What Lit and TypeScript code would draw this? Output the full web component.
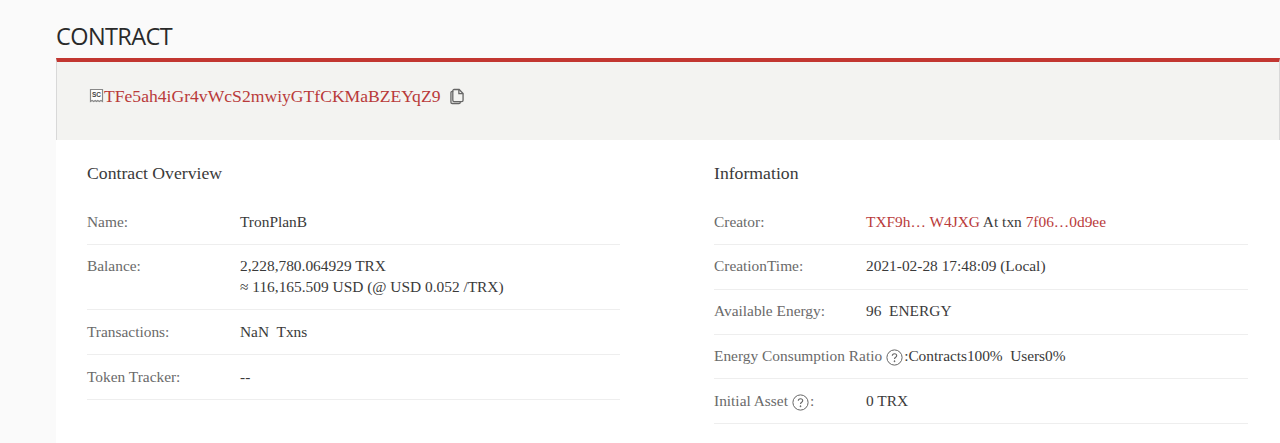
import { LitElement, html, css } from "lit";
import { customElement } from "lit/decorators.js";

const help = html`<svg class="help" width="17" height="17" viewBox="0 0 17 17" fill="none" stroke="#666"><circle cx="8.5" cy="8.5" r="7.6"/><path d="M6.3 6.8c0-1.3 1-2.1 2.2-2.1s2.2.8 2.2 2c0 1.5-2.2 1.6-2.2 3.3" stroke-width="1.1"/><circle cx="8.5" cy="12.2" r=".5" fill="#666"/></svg>`;

@customElement("app-root")
export class AppRoot extends LitElement {
  static styles = css`
    :host { display: block; height: 443px; overflow: hidden; background: #fafafa; font-family: "Liberation Serif", serif; color: #333; }
    .page { padding: 0 0 0 56px; }
    h1 { margin: 0; height: 58px; box-sizing: border-box; padding-top: 20px; font: 400 23.5px/32px "Open Sans", sans-serif; color: #2a2a2a; letter-spacing: -0.6px; }
    .head { height: 82px; box-sizing: border-box; border-top: 4px solid #c23631; border-left: 1px solid #d8d8d8; border-right: 1px solid #d8d8d8; background: #f3f3f1; padding: 23px 0 0 32px; }
    .addr { display: flex; align-items: center; height: 22px; }
    .link { color: #b93a3a; }
    .big { font-size: 17.63px; line-height: 22px; }
    .copy { margin-left: 9px; margin-top: 1px; }
    .body { background: #fff; height: 303px; display: grid; grid-template-columns: 533px 534px; column-gap: 94px; padding: 0 0 0 31px; }
    h2 { margin: 0; height: 60px; box-sizing: border-box; padding-top: 23px; font: 400 17.7px/20px "Liberation Serif", serif; color: #3a3a3a; }
    .row { display: flex; align-items: flex-start; border-bottom: 1px solid #eee; font-size: 15.4px; line-height: 20.7px; padding: 11.6px 0 11.55px; }
    .lbl { width: 153px; flex: none; color: #6a6a6a; display: flex; align-items: center; white-space: nowrap; }
    .val { color: #3a3a3a; white-space: pre; }
    .help { margin: 0 1px 0 4px; flex: none; position: relative; top: 1px; }
    .right .lbl { width: 152px; }
    .wide .lbl { width: auto; }
    .tight { letter-spacing: -0.05px; }
  `;
  render() {
    return html`<div class="page">
      <h1>CONTRACT</h1>
      <div class="head"><div class="addr">
        <svg width="15" height="16" viewBox="0 0 15 16" fill="none"><path d="M1.5 1.5h12v12l-1.6-1-1.6 1-1.5-1-1.3 1-1.3-1-1.5 1-1.6-1-1.6 1z" fill="#fff" stroke="#888" stroke-width="1.2"/><text x="7.5" y="9.2" text-anchor="middle" font-family="Liberation Sans" font-size="6.5" font-weight="700" fill="#444">SC</text></svg>
        <span class="link big">TFe5ah4iGr4vWcS2mwiyGTfCKMaBZEYqZ9</span>
        <svg class="copy" width="14" height="17" viewBox="0 0 15 17" fill="none" stroke="#666" stroke-width="1.4"><path d="M3.5 3H2.4C1.6 3 1 3.6 1 4.4v10.2c0 .8.6 1.4 1.4 1.4h7.2c.8 0 1.4-.6 1.4-1.4V14"/><path d="M4.4 1h5.4L14 5.2v7.4c0 .8-.6 1.4-1.4 1.4H4.4c-.8 0-1.4-.6-1.4-1.4V2.4C3 1.6 3.6 1 4.4 1z"/><path d="M9.5 1v4.5H14"/></svg>
      </div></div>
      <div class="body">
        <div>
          <h2>Contract Overview</h2>
          <div class="row"><div class="lbl">Name:</div><div class="val">TronPlanB</div></div>
          <div class="row"><div class="lbl">Balance:</div><div class="val">2,228,780.064929 TRX
≈ 116,165.509 USD (@ USD 0.052 /TRX)</div></div>
          <div class="row"><div class="lbl">Transactions:</div><div class="val">NaN  Txns</div></div>
          <div class="row"><div class="lbl">Token Tracker:</div><div class="val">--</div></div>
        </div>
        <div class="right">
          <h2>Information</h2>
          <div class="row"><div class="lbl">Creator:</div><div class="val"><span class="link">TXF9h… W4JXG</span> At txn <span class="link">7f06…0d9ee</span></div></div>
          <div class="row"><div class="lbl">CreationTime:</div><div class="val">2021-02-28 17:48:09 (Local)</div></div>
          <div class="row"><div class="lbl">Available Energy:</div><div class="val">96  ENERGY</div></div>
          <div class="row wide"><div class="lbl">Energy Consumption Ratio ${help}</div><div class="val tight">:Contracts100%  Users0%</div></div>
          <div class="row"><div class="lbl">Initial Asset ${help}:</div><div class="val">0 TRX</div></div>
        </div>
      </div>
    </div>`;
  }
}
